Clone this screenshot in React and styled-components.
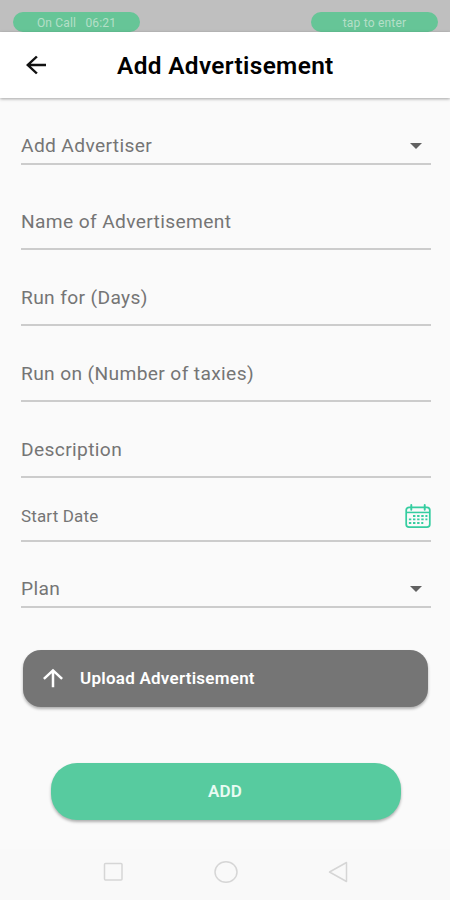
import React from 'react';
import styled, { createGlobalStyle } from 'styled-components';

const GlobalStyle = createGlobalStyle`
  * {
    box-sizing: border-box;
  }

  body {
    margin: 0;
    background-color: #fafafa;
    font-family: Roboto, 'Liberation Sans', sans-serif;
  }
`;

const Screen = styled.div`
  width: 450px;
  height: 900px;
  display: flex;
  flex-direction: column;
  background-color: #fafafa;
  overflow: hidden;
`;

const StatusBar = styled.div`
  height: 32px;
  flex-shrink: 0;
  display: flex;
  justify-content: space-between;
  align-items: flex-end;
  padding: 0 12px 0 13px;
  background-color: #bfbfbf;
`;

const StatusPill = styled.div`
  width: 127px;
  height: 20px;
  display: flex;
  justify-content: center;
  align-items: center;
  padding-top: 2px;
  border-radius: 10px;
  background-color: #66c597;
  color: #b5dfc8;
  font-size: 12px;
  letter-spacing: ${(props) => props.$spacing};
  white-space: pre;
`;

const Header = styled.header`
  position: relative;
  height: 66px;
  flex-shrink: 0;
  display: flex;
  align-items: center;
  padding-left: 21px;
  background-color: #ffffff;
  box-shadow: 0 1px 3px rgba(0, 0, 0, 0.35);
`;

const BackButton = styled.button`
  width: 30px;
  height: 28px;
  padding: 0;
  border: none;
  background: none;
  cursor: pointer;
`;

const Title = styled.h1`
  margin: 0 0 0 66px;
  color: #000000;
  font-size: 24.4px;
  font-weight: 600;
  letter-spacing: 0.35px;
  white-space: nowrap;
`;

const Form = styled.form`
  flex: 1;
  display: flex;
  flex-direction: column;
  padding: 31px 19px 0 21px;
`;

const Field = styled.div`
  height: ${(props) => props.$height}px;
  margin-bottom: ${(props) => props.$gap}px;
  flex-shrink: 0;
  display: flex;
  justify-content: space-between;
  align-items: center;
  border-bottom: 2px solid #cccccc;
`;

const Label = styled.label`
  padding-bottom: ${(props) => (props.$small ? '0' : '2px')};
  color: #757575;
  font-size: ${(props) => (props.$small ? '17px' : '19.2px')};
  letter-spacing: ${(props) => (props.$small ? '0.15px' : '0.36px')};
  white-space: nowrap;
`;

const Caret = styled.svg`
  width: 12px;
  height: 6px;
  margin-right: 9px;
`;

const Button = styled.button`
  height: 57px;
  flex-shrink: 0;
  display: flex;
  align-items: center;
  border: none;
  color: #ffffff;
  font-family: inherit;
  font-size: 17px;
  font-weight: 600;
  letter-spacing: 0.25px;
  cursor: pointer;
  box-shadow: 0 2px 3px rgba(0, 0, 0, 0.3);
`;

const UploadButton = styled(Button)`
  margin: 42px 3px 0 2px;
  padding: 0 15px 1px;
  gap: 12px;
  border-radius: 18px;
  background-color: #757575;
`;

const AddButton = styled(Button)`
  justify-content: center;
  margin: 56px 30px 0;
  padding: 0 2px 1px 0;
  border-radius: 26px;
  background-color: #57cb9f;
  color: #e9fbf3;
`;

const NavBar = styled.nav`
  height: 51px;
  flex-shrink: 0;
  display: flex;
  justify-content: center;
  align-items: center;
  gap: 88px;
  padding: 0 0 6px 1px;
  background-color: #f9f9f9;
`;

const ArrowSvg = styled.svg`
  display: block;
  width: 30px;
  height: 28px;
`;

const ArrowIcon = ({ color, up }) => (
  <ArrowSvg viewBox="0 0 24 24" preserveAspectRatio="none" fill={color}>
    {up ? (
      <path d="M4 12l1.41 1.41L11 7.83V20h2V7.83l5.58 5.59L20 12l-8-8-8 8z" />
    ) : (
      <path d="M20 11H7.83l5.59-5.59L12 4l-8 8 8 8 1.41-1.41L7.83 13H20v-2z" />
    )}
  </ArrowSvg>
);

const CalendarIcon = () => (
  <svg width="26" height="24" viewBox="0 0 27 25" fill="none" stroke="#35cda0">
    <rect x="1.2" y="3.5" width="24.6" height="20.5" rx="3" strokeWidth="1.8" />
    <path d="M1.5 8.8h24" strokeWidth="1.6" />
    <path d="M6.5 1v5M20.5 1v5" strokeWidth="2" strokeLinecap="round" />
    <path d="M8.3 12.5h15M4 16h19.3M4 19.8h15" strokeWidth="2" strokeDasharray="2.5 1.8" />
  </svg>
);

const fields = [
  { label: 'Add Advertiser', height: 36, gap: 31, icon: 'caret' },
  { label: 'Name of Advertisement', height: 54, gap: 22 },
  { label: 'Run for (Days)', height: 54, gap: 22 },
  { label: 'Run on (Number of taxies)', height: 54, gap: 22 },
  { label: 'Description', height: 54, gap: 14 },
  { label: 'Start Date', height: 50, gap: 30, icon: 'calendar', small: true },
  { label: 'Plan', height: 36, gap: 0, icon: 'caret' },
];

const App = () => {
  return (
    <>
      <GlobalStyle />
      <Screen>
        <StatusBar>
          <StatusPill $spacing="0.15px">{'On Call   06:21'}</StatusPill>
          <StatusPill $spacing="0.2px">tap to enter</StatusPill>
        </StatusBar>
        <Header>
          <BackButton type="button" aria-label="Back">
            <ArrowIcon color="#111111" />
          </BackButton>
          <Title>Add Advertisement</Title>
        </Header>
        <Form>
          {fields.map((field) => (
            <Field key={field.label} $height={field.height} $gap={field.gap}>
              <Label $small={field.small}>{field.label}</Label>
              {field.icon === 'caret' && (
                <Caret viewBox="0 0 12 6">
                  <path d="M0 0h12L6 6z" fill="#616161" />
                </Caret>
              )}
              {field.icon === 'calendar' && <CalendarIcon />}
            </Field>
          ))}
          <UploadButton type="button">
            <ArrowIcon color="#ffffff" up />
            Upload Advertisement
          </UploadButton>
          <AddButton type="button">ADD</AddButton>
        </Form>
        <NavBar>
          <svg width="24" height="24" viewBox="0 0 24 24" fill="none" stroke="#d6d6d6" strokeWidth="1.5">
            <rect x="2.5" y="3.5" width="17.5" height="16.5" rx="1" />
          </svg>
          <svg width="24" height="24" viewBox="0 0 24 24" fill="none" stroke="#d6d6d6" strokeWidth="1.5">
            <ellipse cx="12" cy="12" rx="11" ry="10.3" />
          </svg>
          <svg width="24" height="24" viewBox="0 0 24 24" fill="none" stroke="#d6d6d6" strokeWidth="1.5" strokeLinejoin="round">
            <path d="M3.5 12L20.5 2.5v19z" />
          </svg>
        </NavBar>
      </Screen>
    </>
  );
};

export default App;
